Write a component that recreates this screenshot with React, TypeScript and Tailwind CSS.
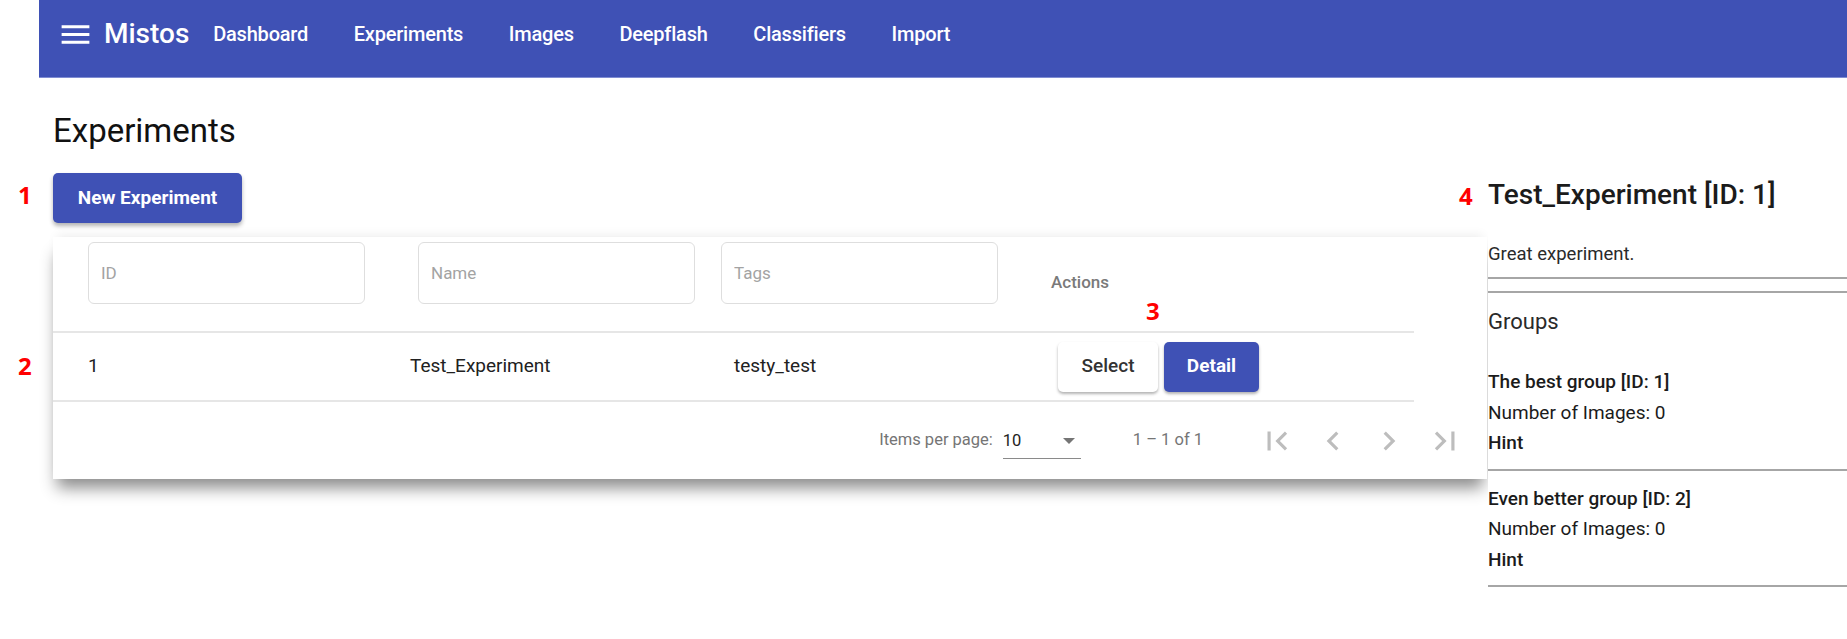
import React from 'react';

const navItems = ['Dashboard', 'Experiments', 'Images', 'Deepflash', 'Classifiers', 'Import'];

const groups = [
  { name: 'The best group [ID: 1]', images: 0 },
  { name: 'Even better group [ID: 2]', images: 0 },
];

// material icon paths
const pageIcons = [
  'M18.41 16.59L13.82 12l4.59-4.59L17 6l-6 6 6 6zM6 6h2v12H6z',
  'M15.41 7.41L14 6l-6 6 6 6 1.41-1.41L10.83 12z',
  'M10 6L8.59 7.41 13.17 12l-4.58 4.59L10 18l6-6z',
  'M5.59 7.41L10.18 12l-4.59 4.59L7 18l6-6-6-6zM16 6h2v12h-2z',
];

const Marker = ({ n, className }: { n: string; className: string }) => (
  <span
    className={`absolute font-['Open_Sans',sans-serif] font-bold text-[24px] leading-[24px] text-[#ff0000] ${className}`}
  >
    {n}
  </span>
);

const FilterInput = ({ label, className = '' }: { label: string; className?: string }) => (
  <input
    readOnly
    placeholder={label}
    className={`w-[277px] h-[62px] rounded-[6px] border border-[#dedede] px-[12px] text-[17px] text-[#333] placeholder:text-[#a3a3a3] outline-none bg-white ${className}`}
  />
);

const Toolbar = () => (
  <header className="h-[78px] bg-[#3f51b5] border-b border-[#7f8cd2]">
    <div className="h-[68px] flex items-center pl-[18px]">
      <svg viewBox="0 0 24 24" className="w-[37px] h-[37px] fill-white">
        <path d="M3 18h18v-2H3v2zm0-5h18v-2H3v2zm0-7v2h18V6H3z" />
      </svg>
      <span className="ml-[10px] text-[28px] font-medium text-white leading-none">Mistos</span>
      <nav className="flex ml-px">
        {navItems.map((item) => (
          <span key={item} className="px-[22.8px] text-[20px] font-medium text-white leading-none tracking-[-0.2px]">
            {item}
          </span>
        ))}
      </nav>
    </div>
  </header>
);

const ExperimentTable = () => (
  <div className="w-[1434px] bg-white shadow-[0_13px_15px_-4px_rgba(0,0,0,0.45),0_-6px_10px_-4px_rgba(0,0,0,0.07)]">
    <div className="w-[1361px]">
      <div className="h-[96px] flex pl-[35px] pt-[5px] border-b-2 border-[#e6e6e6]">
        <div className="w-[322px]">
          <FilterInput label="ID" />
        </div>
        <div className="w-[311px]">
          <FilterInput label="Name" className="ml-[8px]" />
        </div>
        <div className="w-[330px]">
          <FilterInput label="Tags" />
        </div>
        <div className="flex-1 self-center pb-[8px] text-[17px] font-medium text-[#7a7a7a]">Actions</div>
      </div>
      <div className="h-[69px] flex items-center pl-[35px] border-b-2 border-[#e6e6e6] text-[19px] text-[#212121]">
        <div className="w-[322px]">1</div>
        <div className="w-[311px]">Test_Experiment</div>
        <div className="w-[330px] pl-[13px]">testy_test</div>
        <div className="flex-1 flex gap-[6px] pl-[7px]">
          <button className="w-[100px] h-[50px] rounded-[5px] bg-white text-[19px] font-medium text-[#333] shadow-[0_2px_3px_rgba(0,0,0,0.3)]">
            Select
          </button>
          <button className="w-[95px] h-[50px] rounded-[5px] bg-[#3f51b5] text-[19px] font-bold text-white shadow-[0_2px_3px_rgba(0,0,0,0.3)]">
            Detail
          </button>
        </div>
      </div>
    </div>
    <div className="h-[77px] flex items-center justify-end pr-[14px] text-[16.5px] text-[#757575]">
      <span>Items per page:</span>
      <div className="ml-[10px] w-[78px] h-[36px] flex items-center justify-between border-b border-[#8a8a8a] pt-[2px]">
        <span className="text-[#222]">10</span>
        <svg viewBox="0 0 12 6" className="w-[12px] h-[6px] mr-[6px] fill-[#757575]">
          <path d="M0 0h12L6 6z" />
        </svg>
      </div>
      <span className="ml-[52px] mr-[46px]">1 – 1 of 1</span>
      <div className="flex">
        {pageIcons.map((d) => (
          <div key={d} className="w-[56px] flex justify-center">
            <svg viewBox="0 0 24 24" className="w-[38px] h-[38px] fill-[#bdbdbd]">
              <path d={d} />
            </svg>
          </div>
        ))}
      </div>
    </div>
  </div>
);

const DetailPanel = () => (
  <aside className="flex-1 pt-[100px] bg-white relative">
    <h2 className="text-[28px] leading-[34px] font-medium text-[#1b1b1b]">Test_Experiment [ID: 1]</h2>
    <p className="mt-[28px] text-[18.5px] leading-[28px] text-[#2a2a2a]">Great experiment.</p>
    <div className="mt-[9px] h-[2px] bg-[#a6a6a6]" />
    <div className="mt-[12px] h-[2px] bg-[#a6a6a6]" />
    <h3 className="mt-[14px] text-[22px] leading-[30px] text-[#2a2a2a]">Groups</h3>
    <div className="mt-[30px]">
      {groups.map((g, i) => (
        <div key={g.name} className={i > 0 ? 'pt-[13px]' : ''}>
          <div className="text-[19px] leading-[30.5px] text-[#1b1b1b]">
            <div className="font-medium">{g.name}</div>
            <div>Number of Images: {g.images}</div>
            <div className="font-medium">Hint</div>
          </div>
          <div className="mt-[10px] h-[2px] bg-[#a6a6a6]" />
        </div>
      ))}
    </div>
  </aside>
);

export default function App() {
  return (
    <div className="relative flex min-h-[639px] bg-white font-['Roboto',sans-serif]">
      <div className="w-[39px] shrink-0" />
      <div className="flex-1 flex flex-col">
        <Toolbar />
        <div className="flex">
          <main className="pl-[14px] w-[1449px] shrink-0 pt-[33px]">
            <h1 className="text-[33px] leading-[40px] text-[#111]">Experiments</h1>
            <button className="mt-[22px] w-[189px] h-[50px] rounded-[5px] bg-[#3f51b5] text-[19px] font-bold text-white shadow-[0_3px_4px_rgba(0,0,0,0.3)]">
              New Experiment
            </button>
            <div className="mt-[14px]">
              <ExperimentTable />
            </div>
          </main>
          <DetailPanel />
        </div>
      </div>
      <Marker n="1" className="left-[18px] top-[183px]" />
      <Marker n="2" className="left-[18px] top-[354px]" />
      <Marker n="3" className="left-[1146px] top-[299px]" />
      <Marker n="4" className="left-[1459px] top-[184px]" />
    </div>
  );
}
